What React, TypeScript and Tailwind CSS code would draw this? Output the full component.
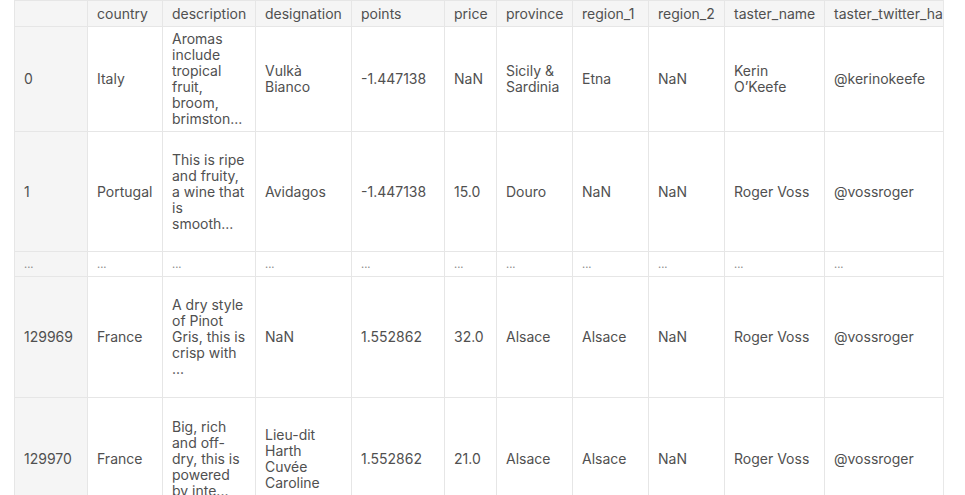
const columns = [
  { name: "", w: "w-[73px]" },
  { name: "country", w: "w-[75px]" },
  { name: "description", w: "w-[93px]" },
  { name: "designation", w: "w-[96px]" },
  { name: "points", w: "w-[93px]" },
  { name: "price", w: "w-[52px]" },
  { name: "province", w: "w-[76px]" },
  { name: "region_1", w: "w-[76px]" },
  { name: "region_2", w: "w-[76px]" },
  { name: "taster_name", w: "w-[100px]" },
  { name: "taster_twitter_handle", w: "w-[170px]" },
  { name: "title", w: "w-[200px]" },
  { name: "variety", w: "w-[120px]" },
  { name: "winery", w: "w-[150px]" },
];

const rows = [
  {
    h: "h-[105px]",
    cells: [
      "0",
      "Italy",
      "Aromas include tropical fruit, broom, brimston...",
      "Vulkà Bianco",
      "-1.447138",
      "NaN",
      "Sicily & Sardinia",
      "Etna",
      "NaN",
      "Kerin O’Keefe",
      "@kerinokeefe",
      "Nicosia 2013",
      "White Blend",
      "Nicosia",
    ],
  },
  {
    h: "h-[120px]",
    cells: [
      "1",
      "Portugal",
      "This is ripe and fruity, a wine that is smooth...",
      "Avidagos",
      "-1.447138",
      "15.0",
      "Douro",
      "NaN",
      "NaN",
      "Roger Voss",
      "@vossroger",
      "Quinta dos Avidagos",
      "Portuguese Red",
      "Quinta dos",
    ],
  },
  { h: "h-[25px]", dots: true, cells: columns.map(() => "...") },
  {
    h: "h-[121px]",
    cells: [
      "129969",
      "France",
      "A dry style of Pinot Gris, this is crisp with ...",
      "NaN",
      "1.552862",
      "32.0",
      "Alsace",
      "Alsace",
      "NaN",
      "Roger Voss",
      "@vossroger",
      "Domaine Marcel",
      "Pinot Gris",
      "Domaine Marcel",
    ],
  },
  {
    h: "h-[122px]",
    cells: [
      "129970",
      "France",
      "Big, rich and off-dry, this is powered by inte...",
      "Lieu-dit Harth Cuvée Caroline",
      "1.552862",
      "21.0",
      "Alsace",
      "Alsace",
      "NaN",
      "Roger Voss",
      "@vossroger",
      "Domaine Schoffit",
      "Gewürztraminer",
      "Domaine Schoffit",
    ],
  },
];

export default function App() {
  return (
    <div className="h-[495px] w-[965px] overflow-hidden bg-white pl-[14px] font-['Inter',sans-serif] text-[14px] leading-4 text-[#505050]">
      <div className="w-[930px] overflow-hidden border-r border-[#e8e8e8]">
        <table className="w-[1450px] table-fixed border-collapse">
          <colgroup>
            {columns.map((c, i) => (
              <col key={i} className={c.w} />
            ))}
          </colgroup>
          <thead>
            <tr className="h-[26px] bg-[#f5f5f5]">
              {columns.map((c, i) => (
                <th
                  key={i}
                  className="border border-[#e6e6e6] px-[9px] text-left align-middle font-normal whitespace-nowrap"
                >
                  {c.name}
                </th>
              ))}
            </tr>
          </thead>
          <tbody>
            {rows.map((r, ri) => (
              <tr key={ri} className={r.h}>
                {r.cells.map((v, ci) => (
                  <td
                    key={ci}
                    className={
                      "border border-[#e6e6e6] px-[9px] align-middle break-words " +
                      (ci === 0 ? "bg-[#f5f5f5] " : "") +
                      (ci >= 11 ? "whitespace-nowrap " : "") +
                      (r.dots ? "text-[11px] text-[#8a8a8a]" : "")
                    }
                  >
                    {v}
                  </td>
                ))}
              </tr>
            ))}
          </tbody>
        </table>
      </div>
    </div>
  );
}
